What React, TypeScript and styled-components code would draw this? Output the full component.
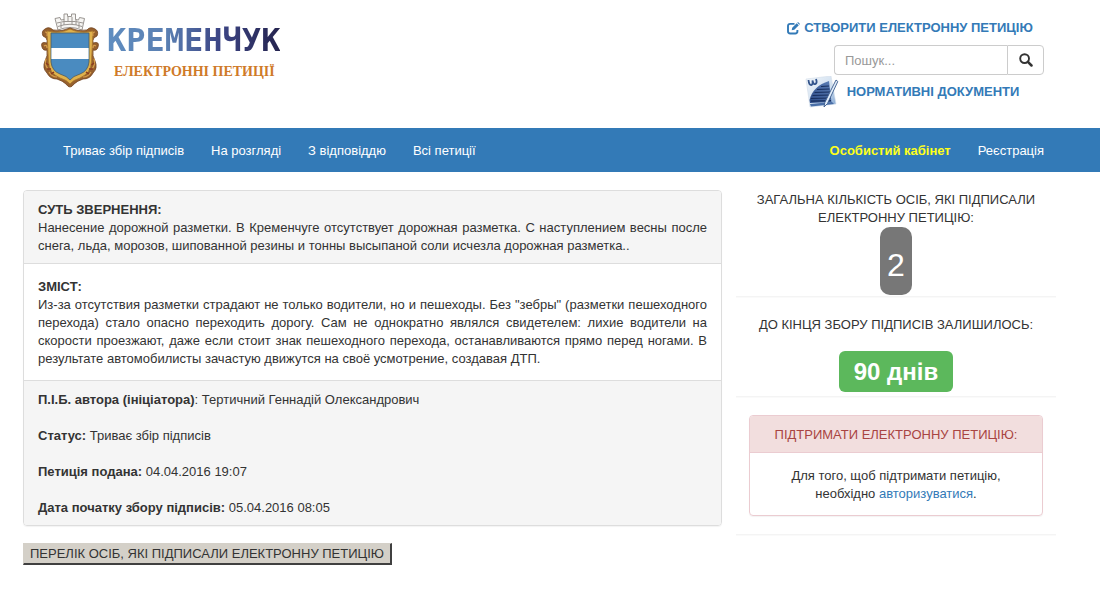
import React from "react";
import styled, { createGlobalStyle, css } from "styled-components";

const GlobalStyle = createGlobalStyle`
  *, *::before, *::after { box-sizing: border-box; }
  body {
    margin: 0;
    background: #fff;
    color: #333;
    font: 13px/18px "Liberation Sans", Arial, sans-serif;
  }
  a { color: #337ab7; text-decoration: none; }
  p, h1, h2, h3 { margin: 0; font-size: inherit; font-weight: inherit; }
`;

const Header = styled.header`
  display: flex;
  justify-content: space-between;
  align-items: flex-start;
  min-height: 128px;
  padding: 12px 56px 0 40px;
`;

const Brand = styled.a`
  display: flex;
  gap: 6px;
`;

const BrandText = styled.div`
  display: flex;
  flex-direction: column;
  padding-top: 9px;
`;

const CityName = styled.span`
  font: bold 32px/38px "DejaVu Sans Mono", monospace;
  background: linear-gradient(90deg, #5f8dc0 0%, #5a7fb2 35%, #3c4585 65%, #25244f 100%);
  background-clip: text;
  -webkit-background-clip: text;
  color: transparent;
`;

const Tagline = styled.span`
  padding: 4px 0 0 7px;
  font: bold 14px/18px "Liberation Serif", "Times New Roman", serif;
  color: #cf7a28;
`;

const Tools = styled.div`
  display: flex;
  flex-direction: column;
  align-items: center;
  width: 268px;
  padding-top: 7px;
`;

const ToolLink = styled.a`
  display: flex;
  align-items: center;
  gap: 4px;
  font-weight: bold;
  white-space: nowrap;
`;

const DocsLink = styled(ToolLink)`
  gap: 8px;
  padding-left: 4px;
`;

const SearchForm = styled.form`
  display: flex;
  align-self: flex-end;
  width: 210px;
  height: 30px;
  margin: 8px 0 1px;
`;

const SearchInput = styled.input`
  flex: 1;
  min-width: 0;
  padding: 1px 10px 0;
  border: 1px solid #ccc;
  border-right-width: 0;
  border-radius: 4px 0 0 4px;
  font: inherit;
  color: #555;
  &::placeholder { color: #999; opacity: 1; }
`;

const SearchButton = styled.button`
  display: grid;
  place-items: center;
  width: 37px;
  padding: 0;
  border: 1px solid #ccc;
  border-radius: 0 4px 4px 0;
  background: #fff;
  color: #333;
`;

const Nav = styled.nav`
  display: flex;
  justify-content: space-between;
  align-items: center;
  min-height: 44px;
  padding: 2px 56px 0 63px;
  background: #337ab7;
`;

const NavGroup = styled.div`
  display: flex;
  gap: 27px;
`;

const NavLink = styled.a<{ $highlight?: boolean }>`
  color: #fff;
  ${(p) => p.$highlight && css`color: #ffff1a; font-weight: bold;`}
`;

const Content = styled.main`
  display: grid;
  grid-template-columns: minmax(0, 1fr) 320px;
  gap: 14px;
  align-items: start;
  padding: 18px 44px 24px 23px;
`;

const Panel = styled.article`
  border: 1px solid #ddd;
  border-radius: 4px;
  overflow: hidden;
  box-shadow: 0 1px 1px rgba(0, 0, 0, 0.05);
`;

const PanelSection = styled.section<{ $shaded?: boolean }>`
  padding: ${(p) => (p.$shaded ? "10px 14px 8px" : "14px 14px 12px")};
  background: ${(p) => (p.$shaded ? "#f5f5f5" : "#fff")};
  text-align: justify;
  & + & { border-top: 1px solid #ddd; }
`;

const SectionTitle = styled.h2`
  && { font-weight: bold; }
`;

const Facts = styled.div`
  display: grid;
  gap: 18px;
`;

const SignersButton = styled.button`
  height: 22px;
  margin-top: 17px;
  padding: 1px 6px 0;
  border: solid;
  border-width: 1px 2px 2px 1px;
  border-color: #d4d0c8 #404040 #404040 #d4d0c8;
  background: #d4d0c8;
  color: #333;
  font: inherit;
  white-space: nowrap;
`;

const Sidebar = styled.aside`
  text-align: center;
`;

const SideBox = styled.section<{ $pad: string }>`
  display: flex;
  flex-direction: column;
  align-items: center;
  padding: ${(p) => p.$pad};
  border-bottom: 1px solid #f4f4f4;
  box-shadow: 0 1px 1px rgba(0, 0, 0, 0.02);
`;

const CountBadge = styled.span`
  padding: 8px 7px 0;
  border-radius: 10px;
  background: #777;
  color: #fff;
  font-size: 32px;
  line-height: 60px;
`;

const DaysLabel = styled.span`
  margin-top: 17px;
  padding: 0 15px;
  border-radius: 6px;
  background: #5cb85c;
  color: #fff;
  font-size: 24px;
  font-weight: bold;
  line-height: 41px;
`;

const SupportPanel = styled.div`
  align-self: stretch;
  border: 1px solid #ebccd1;
  border-radius: 4px;
  overflow: hidden;
  box-shadow: 0 1px 1px rgba(0, 0, 0, 0.05);
`;

const SupportTitle = styled.h3`
  && { padding: 10px 14px 8px; }
  border-bottom: 1px solid #ebccd1;
  background: #f2dede;
  color: #a94442;
`;

const SupportText = styled.p`
  && { padding: 14px 40px 12px; }
`;

function CoatOfArms() {
  return (
    <svg width="61" height="78" viewBox="0 0 61 78" aria-hidden="true">
      <g fill="#f6f5f3" stroke="#9a9692" strokeWidth="1">
        <path d="M18 18 L15 6.500 L20 5.500 L21 8 L24 7.500 V2 H27.500 V4.500 H31.500 V2 H35.500 V7.500 L38.500 8 L39.500 5.500 L44.500 6.500 L42 18 Q30 13 18 18Z" />
        <path d="M17 11 L24 9.500 H35.500 L43 11 M18 14.500 Q30 10 42 14.500 M24 7 V13 M28 5 V10 M32 5 V12 M36 7 V13 M21 11 V16 M39 11 V16" fill="none" />
      </g>
      <path d="M5 17 Q1 19 3 24 Q8 26 7 31 Q0 29 2 35 Q3 39 7 38 Q8 44 5 49 Q2 56 7 61 Q10 67 17 67 Q23 69 26 72 Q28 75 30 75 Q32 75 34 72 Q37 69 43 67 Q50 67 53 61 Q58 56 55 49 Q52 44 53 38 Q57 39 58 35 Q60 29 53 31 Q52 26 57 24 Q59 19 55 17 Q50 14 47 18 Q38 20 30 16 Q22 20 13 18 Q9 14 5 17Z" fill="#96602d" stroke="#70401c" strokeWidth=".8" />
      <path d="M7 19 Q20 22 30 17 Q40 22 53 19 L51.500 50 Q51 61 40 66 Q33 68 30 72 Q27 68 20 66 Q9 61 8.500 50Z" fill="#e0b24c" stroke="#a8752b" strokeWidth=".8" />
      <g fill="none" stroke="#d99f4b" strokeWidth="1.200">
        <path d="M5 20 Q8 20 7 24 M4 34 Q7 32 7 36 M6 47 Q4 52 8 57 M9 60 Q12 65 17 65" />
        <path d="M55 20 Q52 20 53 24 M56 34 Q53 32 53 36 M54 47 Q56 52 52 57 M51 60 Q48 65 43 65" />
      </g>
      <path d="M6 51 L8.500 53 M7 57 L11 57 M11 62 L14 60 M54 51 L51.500 53 M53 57 L49 57 M49 62 L46 60" fill="none" stroke="#8a3a20" strokeWidth="1.500" />
      <path d="M11 21 H49 V50 Q48 59 40 62 Q33 64 30 68 Q27 64 20 62 Q12 59 11 50Z" fill="#4a8bc0" stroke="#4a5a62" strokeWidth=".8" />
      <path d="M11.400 36 H48.600 V47 H11.400Z" fill="#fff" />
    </svg>
  );
}

function EditIcon() {
  return (
    <svg width="13" height="13" viewBox="0 0 13 13" aria-hidden="true">
      <path d="M7.500 1.900 H3.200 Q1 1.900 1 4.100 V9.300 Q1 11.500 3.200 11.500 H8.200 Q10.400 11.500 10.400 9.300 V8" fill="none" stroke="currentColor" strokeWidth="1.900" />
      <path d="M4.700 8.200 L5.200 5.700 L9.700 1.200 L11.800 3.300 L7.300 7.800Z M10.300 .7 L11 0 L13 2 L12.400 2.700Z" fill="currentColor" />
    </svg>
  );
}

function SearchIcon() {
  return (
    <svg width="14" height="14" viewBox="0 0 14 14" aria-hidden="true">
      <circle cx="5.600" cy="5.600" r="4.400" fill="none" stroke="currentColor" strokeWidth="1.900" />
      <path d="M8.900 8.900 L12.500 12.500" stroke="currentColor" strokeWidth="2.500" strokeLinecap="round" />
    </svg>
  );
}

function DocumentIcon() {
  return (
    <svg width="34" height="32" viewBox="0 0 34 32" aria-hidden="true">
      <defs>
        <linearGradient id="paper" x1="0" y1="0" x2="1" y2="1">
          <stop offset="0" stopColor="#f2f6fa" />
          <stop offset=".6" stopColor="#cfdff0" />
          <stop offset="1" stopColor="#7fa3d0" />
        </linearGradient>
        <linearGradient id="sheet" x1="1" y1="0" x2="0" y2="1">
          <stop offset="0" stopColor="#5d7fb6" />
          <stop offset="1" stopColor="#2b4a86" />
        </linearGradient>
      </defs>
      <path d="M1 3 L26 0 L31 28 L5 31Z" fill="url(#paper)" stroke="#d3deea" strokeWidth=".6" />
      <path d="M4.500 24 Q8 10 24 5 L26.500 26 L5 27Z" fill="url(#sheet)" />
      <path d="M16 10.500 L24 10 M12 13.500 L24.500 13 M9.500 16.500 L25 16 M7.500 19.500 L25 19 M6 22.500 L25.500 22 M6 25.200 L26 24.700" stroke="#182f5e" strokeWidth="1.200" />
      <path d="M5 28 L27 26 L29 28 L6 30.500Z" fill="#4a6fa8" />
      <path d="M3.500 4 Q4 9.500 6.500 9 Q8 8.500 7.500 4.500 Q8.500 9 10.500 8 Q12.500 6.500 11 3" fill="none" stroke="#34558c" strokeWidth="1.800" />
      <path d="M31 4 L32.800 5.500 L22.500 27.500 L19 31 L19.800 26.500Z" fill="#e3eefa" stroke="#3a5a8c" strokeWidth=".9" />
    </svg>
  );
}

const sections = ["Триває збір підписів", "На розгляді", "З відповіддю", "Всі петиції"];

const facts = [
  { label: "П.І.Б. автора (ініціатора)", separator: ":", value: "Тертичний Геннадій Олександрович" },
  { label: "Статус:", value: "Триває збір підписів" },
  { label: "Петиція подана:", value: "04.04.2016 19:07" },
  { label: "Дата початку збору підписів:", value: "05.04.2016 08:05" },
];

export default function App() {
  return (
    <>
      <GlobalStyle />
      <Header>
        <Brand href="#">
          <CoatOfArms />
          <BrandText>
            <CityName>КРЕМЕНЧУК</CityName>
            <Tagline>ЕЛЕКТРОННІ ПЕТИЦІЇ</Tagline>
          </BrandText>
        </Brand>
        <Tools>
          <ToolLink href="#">
            <EditIcon />
            СТВОРИТИ ЕЛЕКТРОННУ ПЕТИЦІЮ
          </ToolLink>
          <SearchForm role="search" onSubmit={(e) => e.preventDefault()}>
            <SearchInput type="text" placeholder="Пошук..." aria-label="Пошук" />
            <SearchButton type="submit" aria-label="Шукати">
              <SearchIcon />
            </SearchButton>
          </SearchForm>
          <DocsLink href="#">
            <DocumentIcon />
            НОРМАТИВНІ ДОКУМЕНТИ
          </DocsLink>
        </Tools>
      </Header>

      <Nav>
        <NavGroup>
          {sections.map((name) => (
            <NavLink key={name} href="#">{name}</NavLink>
          ))}
        </NavGroup>
        <NavGroup>
          <NavLink href="#" $highlight>Особистий кабінет</NavLink>
          <NavLink href="#">Реєстрація</NavLink>
        </NavGroup>
      </Nav>

      <Content>
        <div>
          <Panel>
            <PanelSection $shaded>
              <SectionTitle>СУТЬ ЗВЕРНЕННЯ:</SectionTitle>
              <p>
                Нанесение дорожной разметки. В Кременчуге отсутствует дорожная разметка. С наступлением
                весны после снега, льда, морозов, шипованной резины и тонны высыпаной соли исчезла
                дорожная разметка..
              </p>
            </PanelSection>
            <PanelSection>
              <SectionTitle>ЗМІСТ:</SectionTitle>
              <p>
                Из-за отсутствия разметки страдают не только водители, но и пешеходы. Без "зебры"
                (разметки пешеходного перехода) стало опасно переходить дорогу. Сам не однократно являлся
                свидетелем: лихие водители на скорости проезжают, даже если стоит знак пешеходного
                перехода, останавливаются прямо перед ногами. В результате автомобилисты зачастую
                движутся на своё усмотрение, создавая ДТП.
              </p>
            </PanelSection>
            <PanelSection $shaded>
              <Facts>
                {facts.map((fact) => (
                  <p key={fact.label}>
                    <b>{fact.label}</b>{fact.separator} {fact.value}
                  </p>
                ))}
              </Facts>
            </PanelSection>
          </Panel>
          <SignersButton type="button">ПЕРЕЛІК ОСІБ, ЯКІ ПІДПИСАЛИ ЕЛЕКТРОННУ ПЕТИЦІЮ</SignersButton>
        </div>

        <Sidebar>
          <SideBox $pad="1px 13px">
            <h2>ЗАГАЛЬНА КІЛЬКІСТЬ ОСІБ, ЯКІ ПІДПИСАЛИ ЕЛЕКТРОННУ ПЕТИЦІЮ:</h2>
            <CountBadge>2</CountBadge>
          </SideBox>
          <SideBox $pad="19px 13px 4px">
            <h2>ДО КІНЦЯ ЗБОРУ ПІДПИСІВ ЗАЛИШИЛОСЬ:</h2>
            <DaysLabel>90 днів</DaysLabel>
          </SideBox>
          <SideBox $pad="18px 13px">
            <SupportPanel>
              <SupportTitle>ПІДТРИМАТИ ЕЛЕКТРОННУ ПЕТИЦІЮ:</SupportTitle>
              <SupportText>
                Для того, щоб підтримати петицію, необхідно <a href="#">авторизуватися</a>.
              </SupportText>
            </SupportPanel>
          </SideBox>
        </Sidebar>
      </Content>
    </>
  );
}
